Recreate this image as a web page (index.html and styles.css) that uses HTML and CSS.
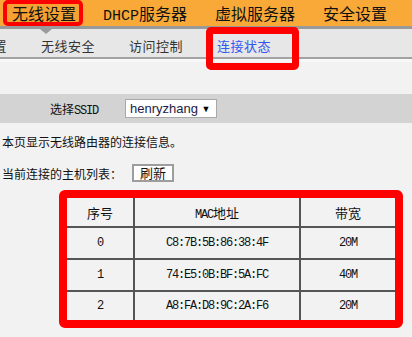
FILE: index.html
```html
<!DOCTYPE html>
<html lang="zh-CN">

<head>
    <meta charset="UTF-8">
    <title>连接状态</title>
    <link rel="stylesheet" href="styles.css">
</head>

<body>
    <div class="topnav">
        <span class="topitem active">无线设置</span>
        <span class="topitem"><span class="latin">DHCP</span>服务器</span>
        <span class="topitem">虚拟服务器</span>
        <span class="topitem">安全设置</span>
    </div>
    <div class="subnav">
        <span class="subitem first">基本设置</span>
        <span class="subitem">无线安全</span>
        <span class="subitem">访问控制</span>
        <span class="subitem current">连接状态</span>
    </div>

    <div class="ssid-row">
        <span class="ssid-label">选择<span class="mono">SSID</span></span>
        <span class="select">henryzhang <span class="arrow">&#9660;</span></span>
    </div>

    <p class="info">本页显示无线路由器的连接信息。</p>

    <div class="list-row">
        <span>当前连接的主机列表：</span>
        <button class="refresh">刷新</button>
    </div>

    <div class="mark">
        <table class="hosts">
            <tr class="head">
                <td class="c1">序号</td>
                <td class="c2"><span class="mono">MAC</span>地址</td>
                <td class="c3">带宽</td>
            </tr>
            <tr>
                <td class="mono">0</td>
                <td class="mono">C8:7B:5B:86:38:4F</td>
                <td class="mono">20M</td>
            </tr>
            <tr>
                <td class="mono">1</td>
                <td class="mono">74:E5:0B:BF:5A:FC</td>
                <td class="mono">40M</td>
            </tr>
            <tr class="last">
                <td class="mono">2</td>
                <td class="mono">A8:FA:D8:9C:2A:F6</td>
                <td class="mono">20M</td>
            </tr>
        </table>
    </div>
</body>

</html>
```

FILE: styles.css
```css
body {
    margin: 0;
    background-color: #f2f2f2;
    font-family: "Noto Sans CJK SC", sans-serif;
    color: #111;
    overflow: hidden;
}

.latin {
    font-family: "Liberation Mono", monospace;
    font-size: 15px;
}

.mono {
    font-family: "Liberation Mono", "Noto Sans CJK SC", monospace;
    font-size: 12px;
    letter-spacing: -1.2px;
}

/* top menu */
.topnav {
    display: flex;
    height: 26px;
    background-color: #f9a937;
    border-bottom: 3px solid #9a9a9a;
    white-space: nowrap;
}

.topitem {
    font-size: 16px;
    line-height: 26px;
    padding: 0 14px;
}

.topitem.active {
    position: relative;
    box-sizing: border-box;
    height: 26px;
    margin: 0 6px 0 3px;
    padding: 0 3px 0 5px;
    line-height: 18px;
    border: 4px solid #ff0000;
    border-radius: 5px;
    background-color: #f6a233;
}

.topitem.active::after {
    content: "";
    position: absolute;
    left: 33px;
    bottom: -12px;
    border-left: 6px solid transparent;
    border-right: 6px solid transparent;
    border-top: 5px solid #9a9a9a;
}

/* second menu */
.subnav {
    display: flex;
    height: 28px;
    background-color: #e7e7e7;
    border-bottom: 2px solid #a3a3a3;
    box-shadow: 0 3px 0 #f8f8f8;
    white-space: nowrap;
}

.subitem {
    position: relative;
    flex: 0 0 88px;
    font-size: 13px;
    letter-spacing: 0.5px;
    line-height: 33px;
    color: #333;
}

.subitem.first {
    margin-left: -47px;
}

.subitem.current {
    color: #3256f0;
}

.subitem.current::after {
    content: "";
    position: absolute;
    left: -11px;
    top: -2px;
    width: 79px;
    height: 29px;
    border: 7px solid #ff0000;
    border-radius: 5px;
}

/* ssid */
.ssid-row {
    display: flex;
    align-items: center;
    height: 29px;
    margin-top: 35px;
    background-color: #d3d3d3;
    font-size: 12px;
}

.ssid-label {
    width: 75px;
    padding-left: 50px;
}

.select {
    box-sizing: border-box;
    width: 92px;
    height: 19px;
    padding-left: 4px;
    background-color: #ffffff;
    border: 1px solid #a9a9a9;
    font-family: "Liberation Sans", Arial, sans-serif;
    font-size: 13px;
    line-height: 17px;
    color: #1b1b46;
}

.arrow {
    font-size: 9px;
    color: #000;
    vertical-align: 1px;
}

.info {
    margin: 10px 0 0 2px;
    font-size: 12px;
    line-height: 18px;
}

.list-row {
    display: flex;
    align-items: center;
    margin: 13px 0 0 2px;
    font-size: 12px;
}

.refresh {
    margin-left: 10px;
    padding: 0 6px;
    height: 18px;
    background-color: #ffffff;
    border: 2px solid #9d9d9d;
    border-radius: 0;
    font-family: "Noto Sans CJK SC", sans-serif;
    font-size: 13px;
    line-height: 14px;
    color: #111;
}

/* host table */
.mark {
    width: 328px;
    margin: 8px 0 0 59px;
    border: 8px solid #ff0000;
    border-radius: 6px;
}

.hosts {
    width: 100%;
    border-collapse: collapse;
    border-style: hidden;
    text-align: center;
}

.hosts td {
    border: 2px solid #555555;
    height: 30px;
    padding: 0;
}

.hosts .head td {
    height: 28px;
    font-size: 13px;
}

.hosts .last td {
    height: 28px;
}

.c1 {
    width: 66px;
}

.c2 {
    width: 164px;
}
```
